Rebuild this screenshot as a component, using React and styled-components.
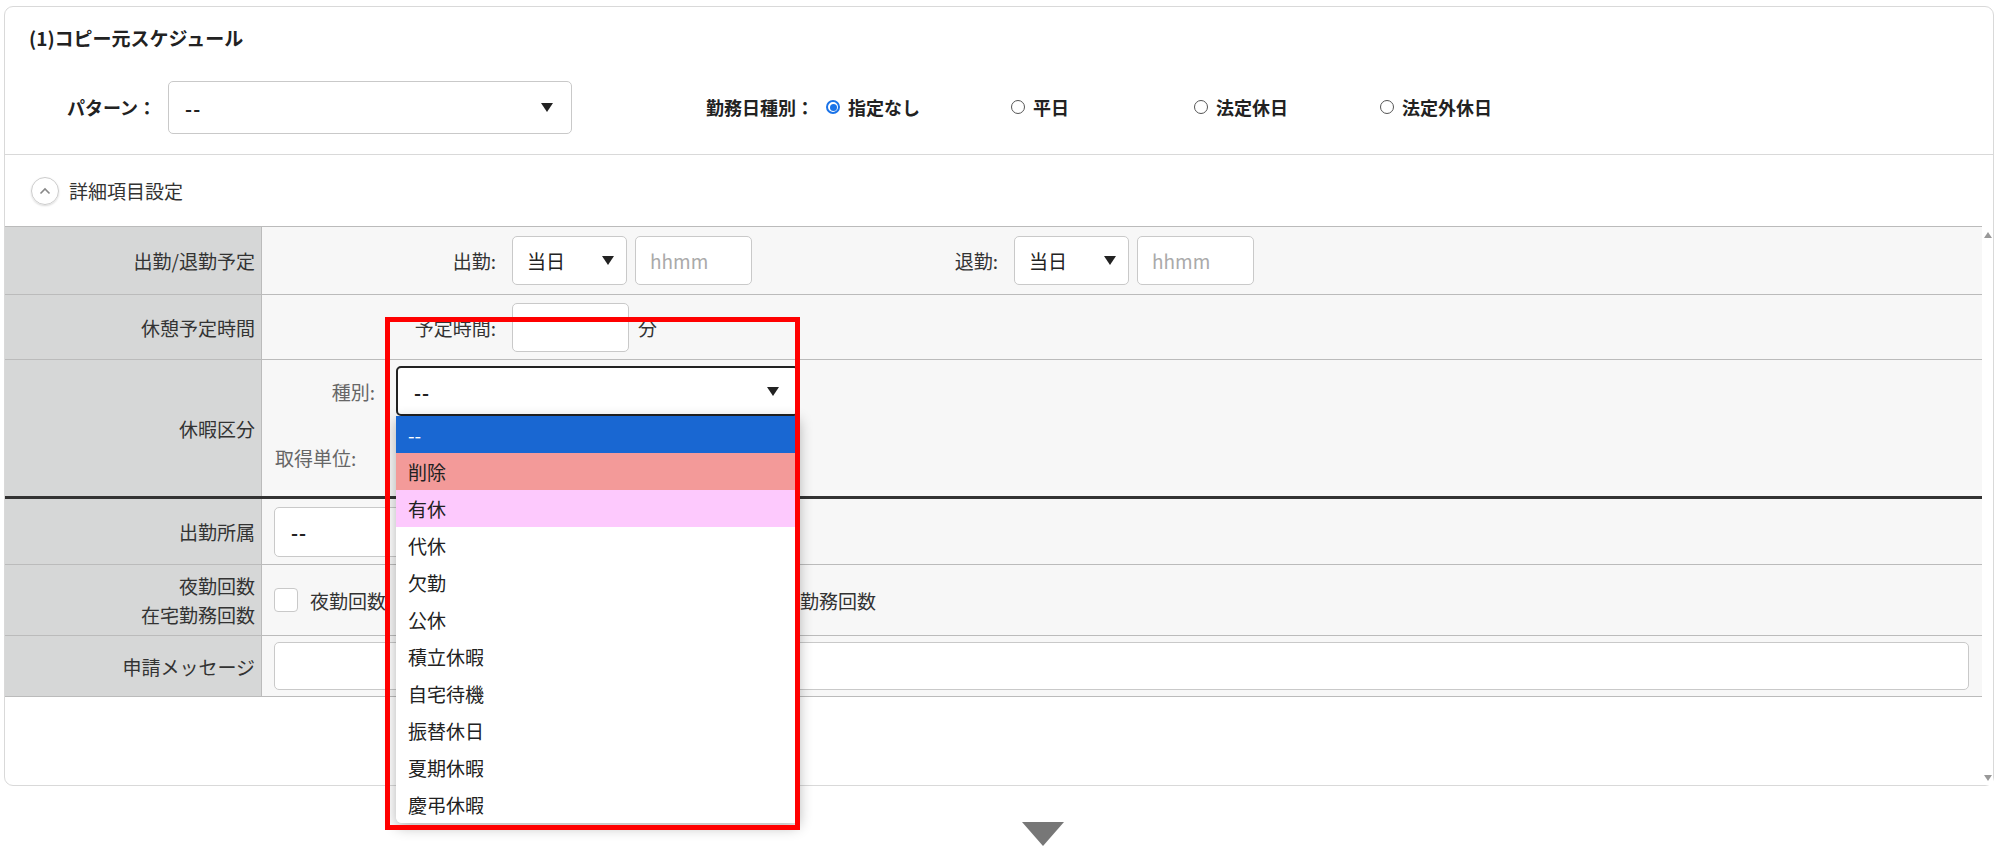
import React from "react";
import styled, { createGlobalStyle } from "styled-components";

const Global = createGlobalStyle`
  body { margin: 0; background: #fff; font-family: "Noto Sans CJK JP", "Noto Sans", sans-serif; color: #222; }
`;

const Page = styled.div`
  width: 2000px;
  height: 846px;
  position: relative;
  overflow: hidden;
`;

const Card = styled.div`
  margin: 6px 6px 0 4px;
  height: 778px;
  border: 1px solid #d9d9d9;
  border-radius: 9px;
  display: flex;
  flex-direction: column;
  overflow: visible;
`;

const Title = styled.div`
  font-weight: bold;
  font-size: 19px;
  padding: 17px 0 0 24px;
  height: 38px;
`;

const PatternRow = styled.div`
  display: flex;
  align-items: center;
  height: 93px;
  padding-left: 62px;
  border-bottom: 1px solid #d9d9d9;
  font-size: 18px;
  font-weight: bold;
  padding-bottom: 2px;
  box-sizing: border-box;
`;

const Select = styled.div`
  width: ${(p) => p.w}px;
  height: ${(p) => p.h || 48}px;
  box-sizing: border-box;
  border: ${(p) => (p.focus ? "2px solid #222" : "1px solid #c9c9c9")};
  border-radius: 5px;
  background: #fff;
  display: flex;
  align-items: center;
  justify-content: space-between;
  padding: 0 ${(p) => (p.small ? 12 : 18)}px 0 ${(p) => (p.small ? 14 : 16)}px;
  font-size: 19px;
  font-weight: normal;
  color: #222;
  &::after {
    content: "";
    border-left: 6px solid transparent;
    border-right: 6px solid transparent;
    border-top: 9px solid #222;
  }
`;

const Dashes = styled.span`
  font-weight: bold;
  letter-spacing: 1px;
`;

const Radio = styled.span`
  width: 14px;
  height: 14px;
  border-radius: 50%;
  box-sizing: border-box;
  border: ${(p) => (p.on ? "2px solid #1a73e8" : "1px solid #555")};
  background: #fff;
  display: inline-flex;
  align-items: center;
  justify-content: center;
  margin-right: 8px;
  &::after {
    content: "";
    width: 7px;
    height: 7px;
    border-radius: 50%;
    background: ${(p) => (p.on ? "#1a73e8" : "transparent")};
  }
`;

const RadioItem = styled.label`
  display: flex;
  align-items: center;
  width: ${(p) => p.w}px;
`;

const DetailHead = styled.div`
  display: flex;
  align-items: center;
  height: 71px;
  padding-left: 26px;
  font-size: 19px;
  color: #333;
  gap: 10px;
`;

const Circle = styled.span`
  width: 26px;
  height: 26px;
  border-radius: 50%;
  border: 1px solid #ccc;
  box-shadow: 0 1px 2px rgba(0, 0, 0, 0.15);
  display: flex;
  align-items: center;
  justify-content: center;
`;

const DetailArea = styled.div`
  display: flex;
  flex: 1;
`;

const Table = styled.div`
  flex: 1;
  display: flex;
  flex-direction: column;
`;

const Row = styled.div`
  display: flex;
  height: ${(p) => p.h}px;
  box-sizing: border-box;
  border-top: ${(p) => (p.thick ? "3px solid #333" : "1px solid #bbb")};
  &:last-child { border-bottom: 1px solid #bbb; }
`;

const Label = styled.div`
  width: 250px;
  background: #d6d7d7;
  display: flex;
  align-items: center;
  justify-content: flex-end;
  text-align: right;
  padding-right: 6px;
  font-size: 19px;
  line-height: 29px;
  color: #333;
  border-right: 1px solid #bbb;
`;

const Cell = styled.div`
  flex: 1;
  background: #f7f7f7;
  display: flex;
  align-items: center;
  padding-left: ${(p) => p.pl || 12}px;
  font-size: 19px;
  color: #333;
  position: relative;
`;

const FieldLabel = styled.span`
  width: ${(p) => p.w}px;
  text-align: ${(p) => p.align || "right"};
  color: ${(p) => p.c || "#333"};
  margin-right: ${(p) => p.mr || 16}px;
  flex-shrink: 0;
`;

const TextBox = styled.div`
  width: ${(p) => p.w}px;
  height: ${(p) => p.h || 48}px;
  box-sizing: border-box;
  border: 1px solid #c9c9c9;
  border-radius: 5px;
  background: #fff;
  display: flex;
  align-items: center;
  padding-left: 14px;
  color: #aaa;
  margin-left: ${(p) => p.ml || 0}px;
`;

const Check = styled.span`
  width: 24px;
  height: 24px;
  box-sizing: border-box;
  border: 1px solid #c9c9c9;
  border-radius: 4px;
  background: #fff;
  margin-right: 12px;
`;

const KindStack = styled.div`
  display: flex;
  flex-direction: column;
  gap: 28px;
  padding-top: 6px;
`;

const KindLine = styled.div`
  display: flex;
  align-items: center;
`;

const Anchor = styled.div`
  position: relative;
`;

const RedBox = styled.div`
  position: absolute;
  left: -11px;
  top: -49px;
  width: 415px;
  height: 513px;
  border: 5px solid #f00;
  box-sizing: border-box;
  pointer-events: none;
  z-index: 3;
`;

const Menu = styled.div`
  position: absolute;
  left: 0;
  top: 50px;
  width: 403px;
  background: #fff;
  border-radius: 0 0 6px 6px;
  box-shadow: 0 4px 14px rgba(0, 0, 0, 0.3);
  overflow: hidden;
  z-index: 2;
`;

const Option = styled.div`
  height: 37px;
  display: flex;
  align-items: center;
  padding-left: 12px;
  font-size: 19px;
  background: ${(p) => p.bg || "#fff"};
  color: ${(p) => p.fg || "#222"};
`;

const ScrollBar = styled.div`
  width: 17px;
  display: flex;
  flex-direction: column;
  justify-content: space-between;
  align-items: center;
  padding: 6px 0 4px;
  background: #fff;
`;

const Arrow = styled.span`
  border-left: 4px solid transparent;
  border-right: 4px solid transparent;
  ${(p) => (p.up ? "border-bottom: 6px solid #999;" : "border-top: 6px solid #999;")}
`;

const BigArrow = styled.div`
  position: absolute;
  left: 1022px;
  top: 822px;
  border-left: 21px solid transparent;
  border-right: 21px solid transparent;
  border-top: 24px solid #777;
`;

const options = [
  { t: "--", bg: "#1967d2", fg: "#fff" },
  { t: "削除", bg: "#f39a99" },
  { t: "有休", bg: "#fdc9fd" },
  { t: "代休" },
  { t: "欠勤" },
  { t: "公休" },
  { t: "積立休暇" },
  { t: "自宅待機" },
  { t: "振替休日" },
  { t: "夏期休暇" },
  { t: "慶弔休暇" },
];

export default function App() {
  return (
    <Page>
      <Global />
      <Card>
        <Title>(1)コピー元スケジュール</Title>
        <PatternRow>
          <span style={{ marginRight: 12 }}>パターン：</span>
          <Select w={404} h={53}><Dashes>--</Dashes></Select>
          <span style={{ marginLeft: 134, marginRight: 12 }}>勤務日種別：</span>
          <RadioItem w={185}><Radio on />指定なし</RadioItem>
          <RadioItem w={183}><Radio />平日</RadioItem>
          <RadioItem w={186}><Radio />法定休日</RadioItem>
          <RadioItem w={200}><Radio />法定外休日</RadioItem>
        </PatternRow>
        <DetailHead>
          <Circle>
            <svg width="12" height="8" viewBox="0 0 12 8">
              <path d="M1.5 6.5 L6 2 L10.5 6.5" fill="none" stroke="#888" strokeWidth="1.6" />
            </svg>
          </Circle>
          詳細項目設定
        </DetailHead>
        <DetailArea>
          <Table>
            <Row h={68}>
              <Label>出勤/退勤予定</Label>
              <Cell>
                <FieldLabel w={222}>出勤:</FieldLabel>
                <Select w={115} h={49} small>当日</Select>
                <TextBox w={117} h={49} ml={8}>hhmm</TextBox>
                <FieldLabel w={246}>退勤:</FieldLabel>
                <Select w={115} h={49} small>当日</Select>
                <TextBox w={117} h={49} ml={8}>hhmm</TextBox>
              </Cell>
            </Row>
            <Row h={65}>
              <Label>休憩予定時間</Label>
              <Cell>
                <FieldLabel w={222}>予定時間:</FieldLabel>
                <TextBox w={117} h={49} />
                <span style={{ marginLeft: 9 }}>分</span>
              </Cell>
            </Row>
            <Row h={137}>
              <Label>休暇区分</Label>
              <Cell pl={13} style={{ alignItems: "flex-start" }}>
                <KindStack>
                  <KindLine>
                    <FieldLabel w={100} c="#666" mr={21}>種別:</FieldLabel>
                    <Anchor>
                      <Select w={403} h={50} focus><Dashes>--</Dashes></Select>
                      <RedBox />
                      <Menu>
                        {options.map((o) => (
                          <Option key={o.t} bg={o.bg} fg={o.fg}>{o.t}</Option>
                        ))}
                      </Menu>
                    </Anchor>
                  </KindLine>
                  <KindLine>
                    <FieldLabel w={100} c="#666" align="left">取得単位:</FieldLabel>
                  </KindLine>
                </KindStack>
              </Cell>
            </Row>
            <Row h={68} thick>
              <Label>出勤所属</Label>
              <Cell>
                <Select w={500} h={50}><Dashes>--</Dashes></Select>
              </Cell>
            </Row>
            <Row h={71}>
              <Label>夜勤回数<br />在宅勤務回数</Label>
              <Cell>
                <Check />
                <span>夜勤回数</span>
                <span style={{ marginLeft: 340 }} />
                <Check />
                <span>在宅勤務回数</span>
              </Cell>
            </Row>
            <Row h={62}>
              <Label>申請メッセージ</Label>
              <Cell style={{ paddingRight: 13 }}>
                <TextBox w={1695} h={48} />
              </Cell>
            </Row>
          </Table>
          <ScrollBar>
            <Arrow up />
            <Arrow />
          </ScrollBar>
        </DetailArea>
      </Card>
      <BigArrow />
    </Page>
  );
}
